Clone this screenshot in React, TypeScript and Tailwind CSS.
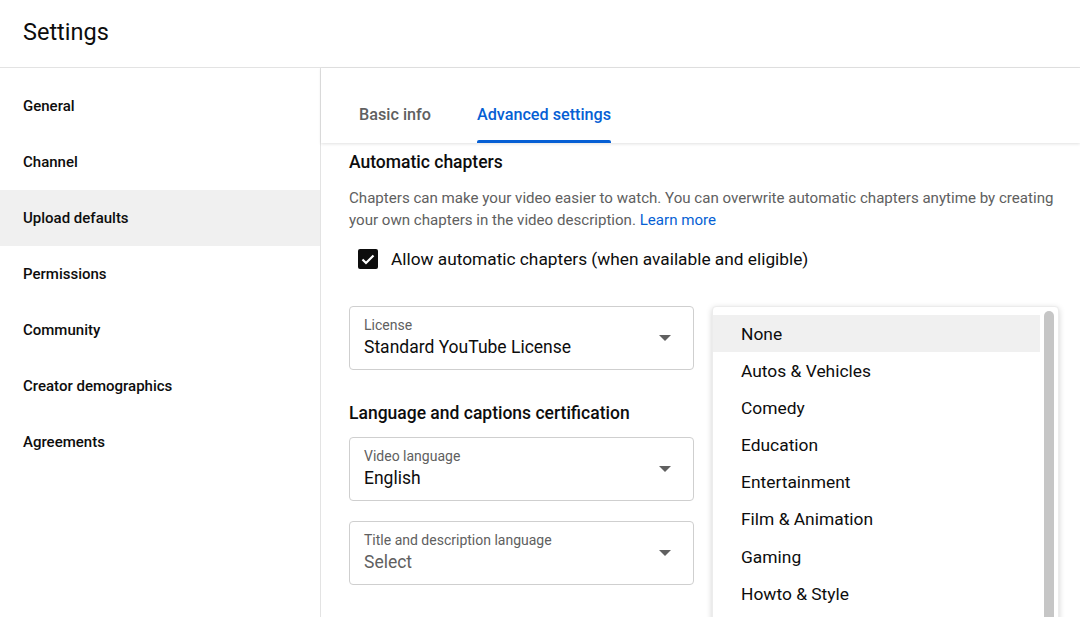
import React from "react";

const navItems = [
  "General",
  "Channel",
  "Upload defaults",
  "Permissions",
  "Community",
  "Creator demographics",
  "Agreements",
];

const categories = [
  "None",
  "Autos & Vehicles",
  "Comedy",
  "Education",
  "Entertainment",
  "Film & Animation",
  "Gaming",
  "Howto & Style",
];

function Caret() {
  return (
    <svg width="12" height="6" viewBox="0 0 12 6" className="shrink-0">
      <path d="M0 0 L12 0 L6 6 Z" fill="#606060" />
    </svg>
  );
}

function SelectField({ label, value, muted }: { label: string; value: string; muted?: boolean }) {
  return (
    <div className="w-[345px] h-[64px] border border-[#cfcfcf] rounded-[4px] flex items-center pl-[14px] pr-[22px]">
      <div className="flex-1 flex flex-col">
        <span className="text-[14px] leading-[16px] text-[#606060]">{label}</span>
        <span className={`text-[17.5px] leading-[24px] mt-[2px] ${muted ? "text-[#606060]" : "text-[#0d0d0d]"}`}>{value}</span>
      </div>
      <Caret />
    </div>
  );
}

export default function App() {
  return (
    <div className="w-[1080px] h-[617px] overflow-hidden bg-white flex flex-col" style={{ fontFamily: "Roboto, 'Noto Sans', sans-serif" }}>
      <div className="h-[68px] shrink-0 border-b border-[#e3e3e3] flex items-center pl-[23px]">
        <h1 className="text-[23.5px] text-[#0d0d0d] font-normal leading-none mt-[-1px]">Settings</h1>
      </div>
      <div className="flex flex-1 min-h-0">
        <nav className="w-[321px] shrink-0 border-r border-[#e3e3e3] pt-[10px] flex flex-col">
          {navItems.map((n) => (
            <div
              key={n}
              className={`h-[56px] flex items-center pl-[23px] text-[15px] font-medium text-[#0d0d0d] ${n === "Upload defaults" ? "bg-[#f0f0f0]" : ""}`}
            >
              {n}
            </div>
          ))}
        </nav>
        <main className="flex-1 relative flex flex-col min-w-0">
          <div className="h-[75px] shrink-0 flex items-end pl-[38px] gap-[46px] shadow-[0_1px_3px_rgba(0,0,0,0.12)] relative z-10">
            <div className="h-[75px] flex items-center pt-[19px] text-[16.2px] font-medium text-[#606060]">Basic info</div>
            <div className="h-[75px] flex flex-col items-center">
              <div className="flex-1 flex items-center pt-[23px] text-[16.2px] font-medium text-[#065fd4]">Advanced settings</div>
              <div className="h-[3px] w-full bg-[#065fd4] rounded-t-[2px]" />
            </div>
          </div>
          <div className="pl-[28px] pt-[8px] flex flex-col">
            <h2 className="text-[17.5px] font-medium text-[#0d0d0d] leading-[22px]">Automatic chapters</h2>
            <p className="mt-[14px] text-[15.1px] leading-[22px] text-[#606060] w-[712px]">
              Chapters can make your video easier to watch. You can overwrite automatic chapters anytime by creating your own chapters in the video description.{" "}
              <span className="text-[#065fd4]">Learn more</span>
            </p>
            <div className="flex items-center mt-[18px] pl-[9px] gap-[13px]">
              <div className="w-[20px] h-[20px] bg-[#0d0d0d] rounded-[2px] flex items-center justify-center">
                <svg width="14" height="11" viewBox="0 0 14 11">
                  <path d="M1.5 5.5 L5 9 L12.5 1.5" stroke="white" strokeWidth="2.2" fill="none" />
                </svg>
              </div>
              <span className="text-[17.3px] leading-[20px] text-[#0d0d0d]">Allow automatic chapters (when available and eligible)</span>
            </div>
            <div className="mt-[37px]">
              <SelectField label="License" value="Standard YouTube License" />
            </div>
            <h2 className="mt-[32px] text-[17.5px] font-medium text-[#0d0d0d] leading-[22px]">Language and captions certification</h2>
            <div className="mt-[13px]">
              <SelectField label="Video language" value="English" />
            </div>
            <div className="mt-[20px]">
              <SelectField label="Title and description language" value="Select" muted />
            </div>
          </div>
          <div className="absolute left-[391px] top-[238px] w-[347px] h-[330px] bg-white rounded-[4px] shadow-[0_2px_6px_rgba(0,0,0,0.18)] border border-[#ececec] pt-[8px] overflow-hidden z-20">
            {categories.map((c) => (
              <div
                key={c}
                className={`w-[327px] h-[37.2px] flex items-center pl-[28px] text-[17.4px] text-[#0d0d0d] ${c === "None" ? "bg-[#f0f0f0]" : ""}`}
              >
                {c}
              </div>
            ))}
            <div className="absolute right-[4px] top-[4px] w-[10px] h-[340px] bg-[#c6c6c6] rounded-full" />
          </div>
        </main>
      </div>
    </div>
  );
}
